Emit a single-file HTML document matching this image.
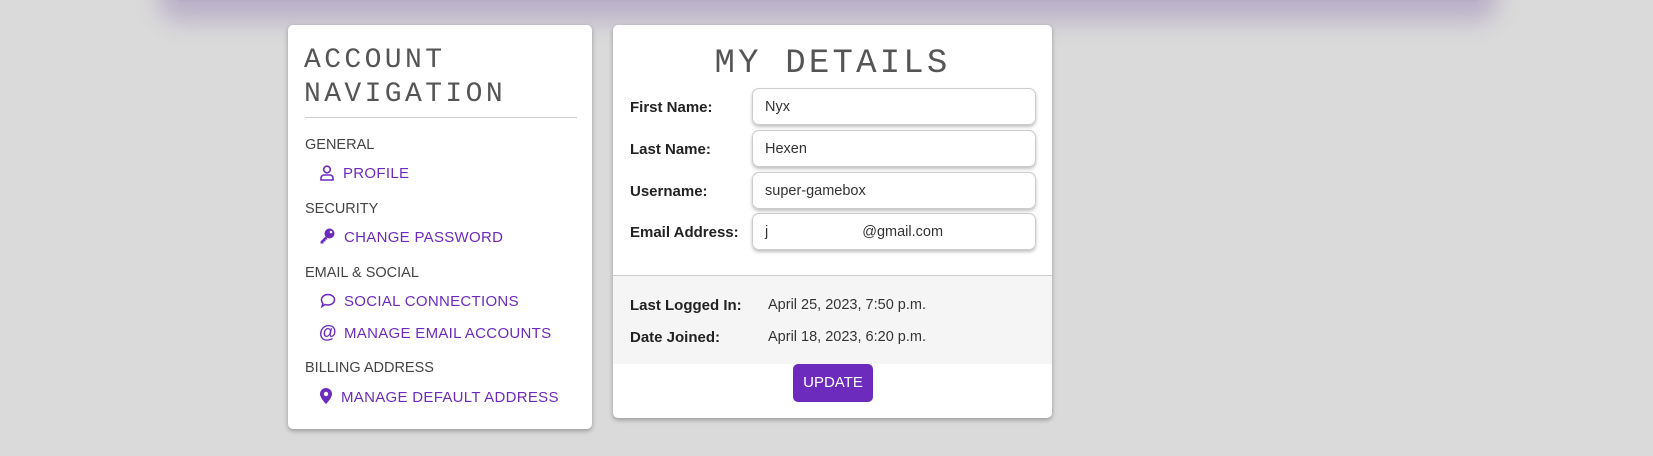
<!DOCTYPE html>
<html><head><meta charset="utf-8"><style>
*{margin:0;padding:0;box-sizing:border-box}
body{width:1653px;height:456px;background:#dadada;position:relative;overflow:hidden;font-family:"Liberation Sans",sans-serif}
.topbar{position:absolute;left:172px;top:-40px;width:1312px;height:42px;background:#b8afc6;box-shadow:0 6px 22px 14px rgba(150,130,180,.45);border-radius:10px}
.card{position:absolute;background:#fff;border-radius:5px;box-shadow:0 2px 5px rgba(0,0,0,.3);overflow:hidden}
.t{position:absolute;white-space:nowrap}
.mono{font-family:"Liberation Mono",monospace;color:#555}
.sec{font-size:14.5px;color:#444}
.nav{font-size:15px;color:#6c2bbd;letter-spacing:.3px}
.lbl{font-size:15px;font-weight:bold;color:#222}
.inp{position:absolute;left:139px;width:284px;height:37px;border:1px solid #ccc;border-radius:7px;box-shadow:0 2px 3px rgba(0,0,0,.25);font-size:14.5px;color:#333;padding-left:12px;line-height:37px}
</style></head><body>
<div class="topbar"></div>

<div class="card" style="left:288px;top:25px;width:304px;height:404px">
  <div class="t mono" style="left:16px;top:19px;font-size:28px;letter-spacing:3.4px;line-height:34px">ACCOUNT<br>NAVIGATION</div>
  <div style="position:absolute;left:17px;top:92px;width:272px;height:1px;background:#ccc"></div>
  <div class="t sec" style="left:17px;top:112px">GENERAL</div>
  <svg style="position:absolute;left:32px;top:140px" width="14" height="16" viewBox="0 0 14 16" fill="none" stroke="#6c2bbd" stroke-width="1.6"><circle cx="7" cy="4.5" r="3.3"/><path d="M1 15v-2a3 3 0 0 1 3-3h6a3 3 0 0 1 3 3v2z"/></svg>
  <div class="t nav" style="left:55px;top:140px">PROFILE</div>
  <div class="t sec" style="left:17px;top:176px">SECURITY</div>
  <svg style="position:absolute;left:31px;top:203px" width="16" height="16" viewBox="0 0 16 16"><circle cx="10.5" cy="5.5" r="5" fill="#6c2bbd"/><path d="M7 8L1.5 13.5v2h3v-2h2v-2h2z" fill="#6c2bbd"/><circle cx="12" cy="4" r="1.3" fill="#fff"/></svg>
  <div class="t nav" style="left:56px;top:204px">CHANGE PASSWORD</div>
  <div class="t sec" style="left:17px;top:240px">EMAIL &amp; SOCIAL</div>
  <svg style="position:absolute;left:32px;top:268px" width="16" height="15" viewBox="0 0 16 15" fill="none" stroke="#6c2bbd" stroke-width="1.5"><path d="M8 1.5c3.6 0 6.5 2.3 6.5 5.2S11.6 12 8 12c-1 0-2-.2-2.8-.5L2 13.5l.9-3C1.9 9.5 1.5 8.2 1.5 6.7 1.5 3.8 4.4 1.5 8 1.5z"/></svg>
  <div class="t nav" style="left:56px;top:268px">SOCIAL CONNECTIONS</div>
  <div class="t" style="left:31px;top:297px;font-size:18px;font-weight:bold;color:#6c2bbd">@</div>
  <div class="t nav" style="left:56px;top:300px">MANAGE EMAIL ACCOUNTS</div>
  <div class="t sec" style="left:17px;top:335px">BILLING ADDRESS</div>
  <svg style="position:absolute;left:32px;top:363px" width="12" height="16" viewBox="0 0 12 16"><path d="M6 0a6 6 0 0 1 6 6c0 4-6 10-6 10S0 10 0 6a6 6 0 0 1 6-6z" fill="#6c2bbd"/><circle cx="6" cy="6" r="2.2" fill="#fff"/></svg>
  <div class="t nav" style="left:53px;top:364px">MANAGE DEFAULT ADDRESS</div>
</div>

<div class="card" style="left:613px;top:25px;width:439px;height:393px">
  <div class="t mono" style="left:0;width:439px;text-align:center;top:20px;font-size:34px;letter-spacing:3.2px">MY DETAILS</div>
  <div class="t lbl" style="left:17px;top:74px">First Name:</div>
  <div class="inp" style="top:63px">Nyx</div>
  <div class="t lbl" style="left:17px;top:116px">Last Name:</div>
  <div class="inp" style="top:105px">Hexen</div>
  <div class="t lbl" style="left:17px;top:158px">Username:</div>
  <div class="inp" style="top:147px">super-gamebox</div>
  <div class="t lbl" style="left:17px;top:199px">Email Address:</div>
  <div class="inp" style="top:188px">j<span style="padding-left:94px">@gmail.com</span></div>
  <div style="position:absolute;left:0;top:250px;width:439px;height:89px;background:#f5f5f5;border-top:1px solid #ccc"></div>
  <div class="t lbl" style="left:17px;top:272px">Last Logged In:</div>
  <div class="t" style="left:155px;top:272px;font-size:14.5px;color:#333">April 25, 2023, 7:50 p.m.</div>
  <div class="t lbl" style="left:17px;top:304px">Date Joined:</div>
  <div class="t" style="left:155px;top:304px;font-size:14.5px;color:#333">April 18, 2023, 6:20 p.m.</div>
  <div style="position:absolute;left:180px;top:339px;width:80px;height:38px;background:#6c2bbd;border-radius:5px;color:#fff;font-size:15px;text-align:center;line-height:38px">UPDATE</div>
</div>
</body></html>
